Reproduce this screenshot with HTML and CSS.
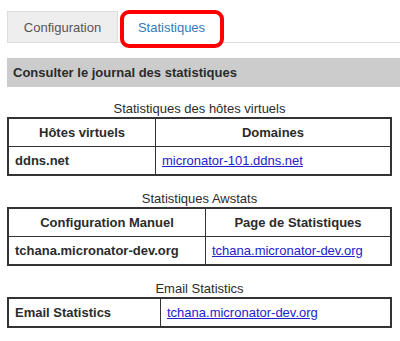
FILE: index.html
```html
<!DOCTYPE html>
<html lang="fr">
<head>
<meta charset="UTF-8">
<title>Statistiques</title>
<link rel="stylesheet" href="styles.css">
</head>
<body>
  <!-- tabs -->
  <ul class="tabs">
    <li class="tab">Configuration</li>
    <li class="tab active">Statistiques
      <span class="highlight"></span>
    </li>
  </ul>

  <!-- section title -->
  <div class="bar">Consulter le journal des statistiques</div>

  <!-- virtual hosts -->
  <table class="stats col-a">
    <caption>Statistiques des hôtes virtuels</caption>
    <tr><th>Hôtes virtuels</th><th>Domaines</th></tr>
    <tr><td class="name">ddns.net</td><td><a href="#">micronator-101.ddns.net</a></td></tr>
  </table>

  <!-- awstats -->
  <table class="stats col-b">
    <caption>Statistiques Awstats</caption>
    <tr><th>Configuration Manuel</th><th>Page de Statistiques</th></tr>
    <tr><td class="name">tchana.micronator-dev.org</td><td><a href="#">tchana.micronator-dev.org</a></td></tr>
  </table>

  <!-- email -->
  <table class="stats col-c">
    <caption>Email Statistics</caption>
    <tr><td class="name">Email Statistics</td><td><a href="#">tchana.micronator-dev.org</a></td></tr>
  </table>
</body>
</html>
```

FILE: styles.css
```css
/* page */
body{
  margin:0;
  padding:11px 8px 0 7px;
  font-family:"Liberation Sans", Arial, sans-serif;
  font-size:13px;
  color:#2b2b2b;
  background:#fff;
  overflow:hidden;
}

/* tabs */
.tabs{
  display:flex;
  list-style:none;
  margin:0 -8px 0 0;
  padding:0;
  border-bottom:1px solid #ddd;
}
.tab{
  height:31px;
  line-height:31px;
  padding:0 15px;
  margin-right:3px;
  margin-bottom:-1px;
  background:#eee;
  border:1px solid #ddd;
  border-bottom:none;
  color:#555;
  box-sizing:border-box;
  width:111px;
  text-align:center;
}
.tab.active{
  position:relative;
  background:#fff;
  color:#337ab7;
  border-color:transparent;
  height:32px;
  width:101px;
}
.highlight{
  position:absolute;
  left:-2px;
  top:-2px;
  width:104px;
  height:38px;
  border:4px solid #f00;
  border-radius:9px;
  box-sizing:border-box;
}

/* section bar */
.bar{
  margin:15px -8px 0 0;
  height:29px;
  line-height:29px;
  padding-left:6px;
  background:#ccc;
  font-weight:bold;
}

/* tables */
.stats{
  width:100%;
  border-collapse:collapse;
  border:2px solid #333;
  margin-top:14px;
}
.stats + .stats{ margin-top:15px }
.stats caption{
  padding-bottom:1px;
  line-height:15px;
}
.stats th,
.stats td{
  border:1px solid #333;
  height:27px;
  padding:0 6px;
}
.stats th{ text-align:center }
.stats td.name{ font-weight:bold }
.stats a{ color:#2222cc }

.col-a td:first-child, .col-a th:first-child{ width:134px }
.col-b td:first-child, .col-b th:first-child{ width:184px }
.col-c td:first-child{ width:139px }
```
